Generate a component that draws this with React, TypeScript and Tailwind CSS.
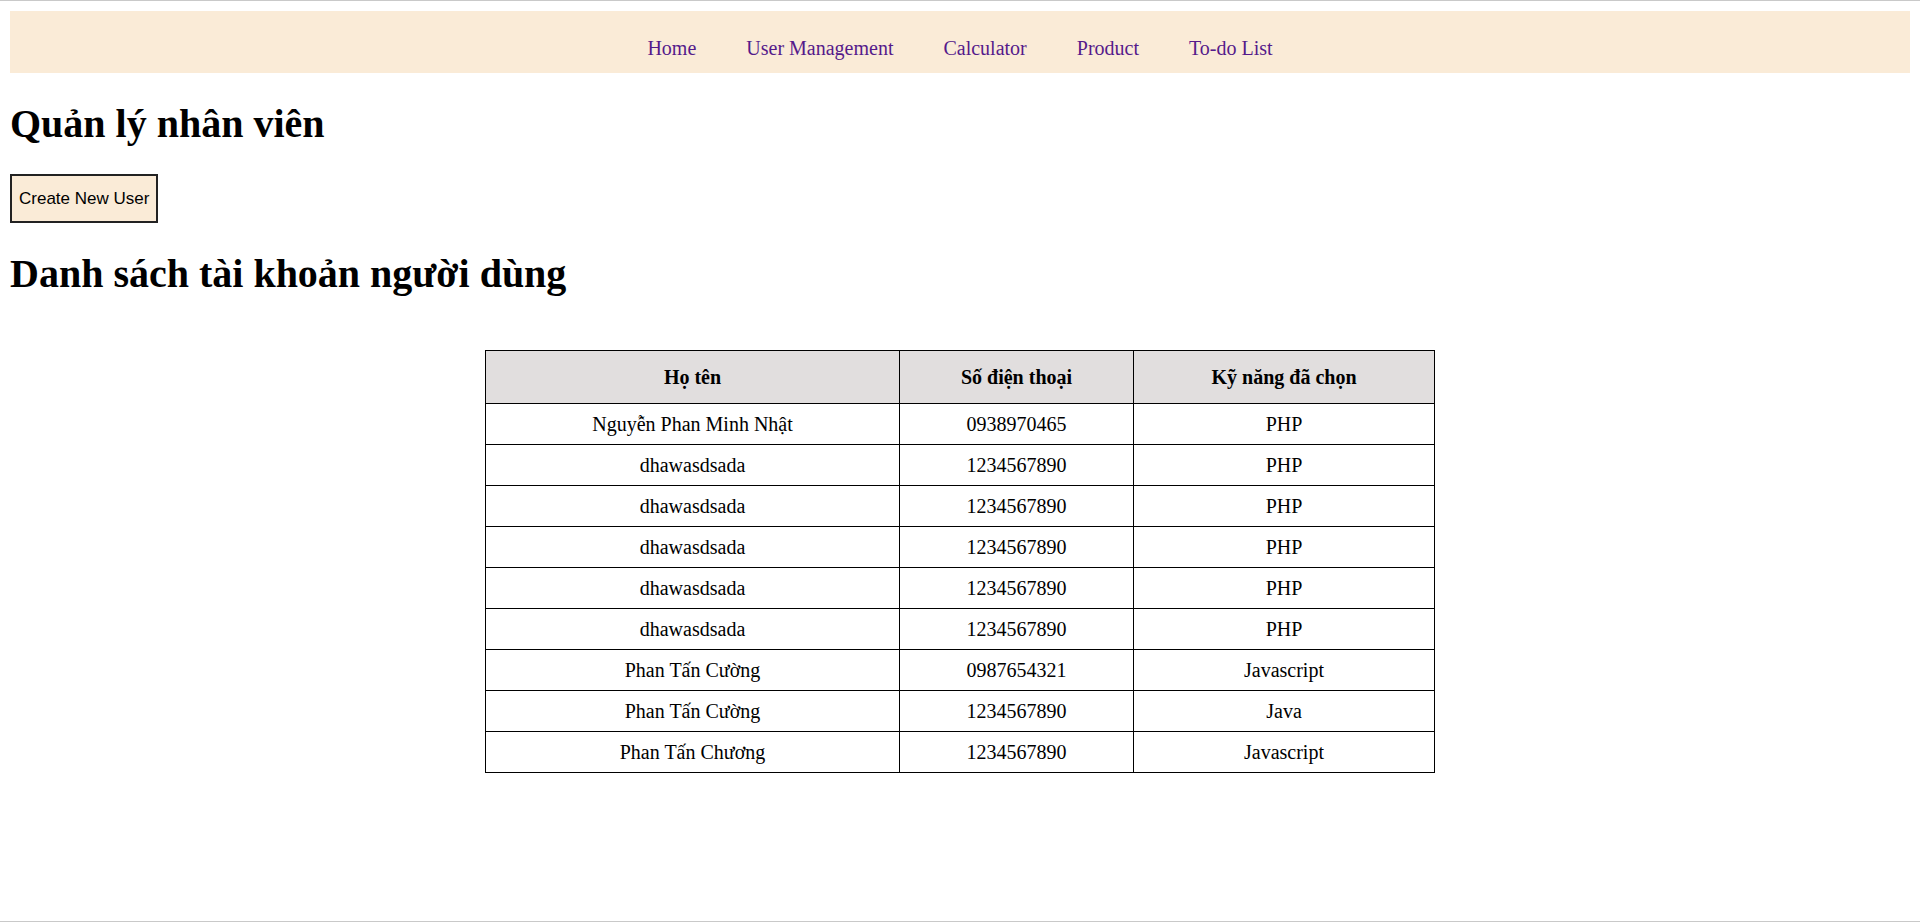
const navLinks = ['Home', 'User Management', 'Calculator', 'Product', 'To-do List'];

const users = [
    { name: 'Nguyễn Phan Minh Nhật', phone: '0938970465', skill: 'PHP' },
    { name: 'dhawasdsada', phone: '1234567890', skill: 'PHP' },
    { name: 'dhawasdsada', phone: '1234567890', skill: 'PHP' },
    { name: 'dhawasdsada', phone: '1234567890', skill: 'PHP' },
    { name: 'dhawasdsada', phone: '1234567890', skill: 'PHP' },
    { name: 'dhawasdsada', phone: '1234567890', skill: 'PHP' },
    { name: 'Phan Tấn Cường', phone: '0987654321', skill: 'Javascript' },
    { name: 'Phan Tấn Cường', phone: '1234567890', skill: 'Java' },
    { name: 'Phan Tấn Chương', phone: '1234567890', skill: 'Javascript' },
];

export default function App() {
    return (
        <div className="flex min-h-[922px] flex-col border-t border-b border-[#c9c9c9] bg-white px-[10px] pt-[10px] font-['Liberation_Serif',serif] text-black">
            <nav className="flex h-[62px] justify-center gap-[50px] bg-[#faebd7] pt-[26px]">
                {navLinks.map((link) => (
                    <a
                        key={link}
                        href="#"
                        className="text-[20px] leading-[22px] text-[#551a8b]"
                    >
                        {link}
                    </a>
                ))}
            </nav>

            <h1 className="mt-[29px] mb-[28px] text-[40px] leading-[44px] font-bold">
                Quản lý nhân viên
            </h1>

            <div>
                <button className="border-2 border-[#222] bg-[#faebd7] px-[7px] py-[13px] font-['Liberation_Sans',sans-serif] text-[17px] leading-[19px]">
                    Create New User
                </button>
            </div>

            <h2 className="mt-[29px] text-[40px] leading-[44px] font-bold">
                Danh sách tài khoản người dùng
            </h2>

            <table className="mx-auto mt-[54px] w-[950px] border-collapse border border-black text-center text-[20px] leading-[23px]">
                <thead>
                    <tr className="h-[53px] bg-[#e1dede]">
                        <th className="w-[414px] border border-black font-bold">Họ tên</th>
                        <th className="w-[234px] border border-black font-bold">Số điện thoại</th>
                        <th className="w-[301px] border border-black font-bold">Kỹ năng đã chọn</th>
                    </tr>
                </thead>
                <tbody>
                    {users.map((user, i) => (
                        <tr key={i} className="h-[41px]">
                            <td className="border border-black">{user.name}</td>
                            <td className="border border-black">{user.phone}</td>
                            <td className="border border-black">{user.skill}</td>
                        </tr>
                    ))}
                </tbody>
            </table>
        </div>
    );
}
